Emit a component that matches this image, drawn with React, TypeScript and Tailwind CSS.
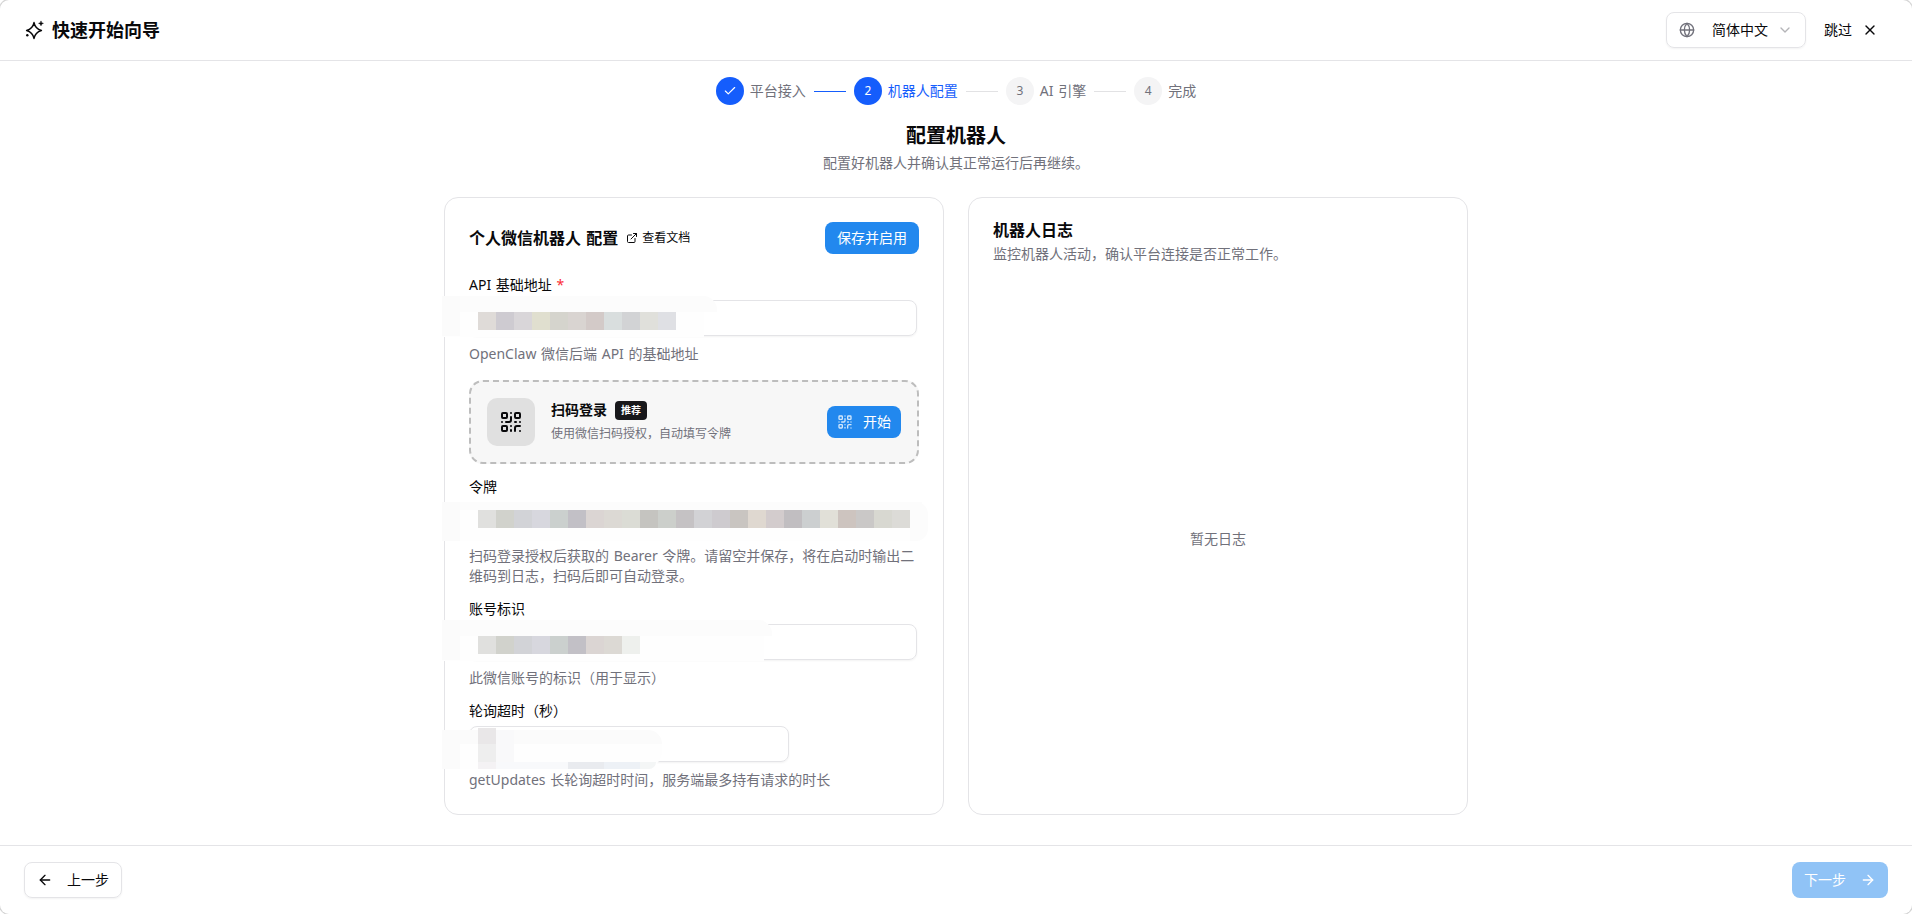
import type { ReactNode } from 'react';
import { ArrowLeft, ArrowRight, Check, ChevronDown, ExternalLink, Globe, QrCode, X } from 'lucide-react';

interface Step {
  label: string;
  state: 'done' | 'active' | 'pending';
}

const steps: Step[] = [
  { label: '平台接入', state: 'done' },
  { label: '机器人配置', state: 'active' },
  { label: 'AI 引擎', state: 'pending' },
  { label: '完成', state: 'pending' },
];

const urlMask = ['#dfdbd8', '#cecbd1', '#d9d6d9', '#e0dfcf', '#d5d4cd', '#d9d4d1', '#d3cac8', '#d9dede', '#d2d3d5', '#e0e0db', '#dfe0e4'];
const tokenMask = [
  '#e0e0de', '#d1d2cc', '#d2d3d7', '#d7d7de', '#cbd0ce', '#c2c0c6', '#dbd5d3', '#dcd9d4',
  '#dbdcd5', '#c5c4c0', '#cccfcb', '#c5c2c4', '#d2d2d5', '#cecbcf', '#c9c5c1', '#dfd8d0',
  '#d3cccd', '#c1bec1', '#cccfd0', '#e1e0d8', '#cdc4bf', '#cac8c7', '#d8d8d1', '#dcdbd7',
];
const accountMask = ['#e0e0de', '#d1d2cc', '#d2d3d7', '#d7d7de', '#cbd0ce', '#c2c0c6', '#dbd5d3', '#dcd9d4', '#eef0ed'];

function SparkleIcon() {
  return (
    <svg viewBox="0 0 20 20" className="h-5 w-5" fill="none">
      <path
        d="M10 2.6c.9 4.6 2.8 6.5 7.4 7.9-4.6 1.4-6.5 3.3-7.4 7.9-.9-4.6-2.8-6.5-7.4-7.9 4.6-1.4 6.5-3.3 7.4-7.9Z"
        stroke="currentColor"
        strokeWidth="1.5"
        strokeLinejoin="round"
      />
      <path d="M17 .9c.4 1.5.9 2 2.4 2.5-1.5.4-2 .9-2.4 2.4-.4-1.5-.9-2-2.4-2.4 1.5-.5 2-1 2.4-2.5Z" fill="currentColor" stroke="currentColor" strokeWidth=".5" />
      <circle cx="3.3" cy="15.3" r="1.2" fill="currentColor" />
    </svg>
  );
}

function MaskBlocks({ colors }: { colors: string[] }) {
  return (
    <div className="flex">
      {colors.map((color, i) => (
        <div key={i} className="h-[18px] w-[18px]" style={{ backgroundColor: color }} />
      ))}
    </div>
  );
}

function Stepper() {
  return (
    <div className="flex items-center justify-center gap-2 pt-4">
      {steps.map((step, i) => (
        <div key={step.label} className="flex items-center gap-2">
          {i > 0 && <div className={`h-px w-8 ${step.state === 'active' ? 'bg-[#155dfc]' : 'bg-[#e2e2e4]'}`} />}
          <div className="flex items-center gap-1.5">
            <div
              className={`flex h-7 w-7 items-center justify-center rounded-full text-xs ${
                step.state === 'pending' ? 'bg-[#f4f4f5] text-[#71717b]' : 'bg-[#155dfc] text-white'
              }`}
            >
              {step.state === 'done' ? <Check className="h-3.5 w-3.5" /> : i + 1}
            </div>
            <span className={`text-sm whitespace-nowrap ${step.state === 'active' ? 'text-[#155dfc]' : 'text-[#71717b]'}`}>
              {step.label}
            </span>
          </div>
        </div>
      ))}
    </div>
  );
}

interface FieldProps {
  label: string;
  description: string;
  required?: boolean;
  width?: string;
  children?: ReactNode;
}

function Field({ label, description, required, width = 'w-[448px]', children }: FieldProps) {
  return (
    <div className="flex flex-col gap-2">
      <label className="text-sm leading-none">
        {label}
        {required && <span className="text-[#fb2c36]"> *</span>}
      </label>
      <div className={`relative h-9 rounded-lg border border-[#e4e4e7] shadow-xs ${width}`}>{children}</div>
      <p className="text-sm text-[#71717b]">{description}</p>
    </div>
  );
}

function QrLoginCard() {
  return (
    <div className="flex h-[84px] items-center rounded-[14px] border-2 border-dashed border-[#bdbdbd] bg-[#f7f7f7] px-4">
      <div className="flex h-12 w-12 items-center justify-center rounded-[10px] bg-[#e0e0e0]">
        <QrCode className="h-6 w-6" />
      </div>
      <div className="ml-4 flex-1">
        <div className="flex items-center gap-2">
          <span className="text-sm font-semibold">扫码登录</span>
          <span className="flex h-[19px] items-center rounded bg-[#18181b] px-1.5 text-[10px] font-bold text-white">推荐</span>
        </div>
        <p className="mt-1 text-xs leading-5 text-[#71717b]">使用微信扫码授权，自动填写令牌</p>
      </div>
      <button className="flex h-8 w-[74px] items-center gap-2.5 rounded-lg bg-[#2288ee] pl-2.5 text-sm text-white">
        <QrCode className="h-4 w-4 opacity-80" />
        开始
      </button>
    </div>
  );
}

export default function App() {
  return (
    <div className="h-[914px] bg-white font-['Noto_Sans','Noto_Sans_CJK_SC',sans-serif] text-[#09090b] [word-spacing:1px]">
      <div className="flex h-full flex-col overflow-hidden rounded-[9px] bg-white shadow-[0_0_0_1px_#d4d4d4]">
        <header className="flex h-[61px] shrink-0 items-center justify-between border-b border-[#e4e4e7] px-6">
          <div className="flex items-center gap-2">
            <SparkleIcon />
            <h1 className="text-lg font-bold">快速开始向导</h1>
          </div>
          <div className="flex items-center">
            <button className="flex h-9 w-[140px] items-center rounded-lg border border-[#e4e4e7] pl-3 text-sm shadow-xs">
              <Globe className="h-4 w-4 text-[#71717b]" />
              <span className="ml-[17px]">简体中文</span>
              <ChevronDown className="ml-[9px] h-4 w-4 text-[#b4b4b8]" />
            </button>
            <button className="mr-2.5 ml-[18px] flex items-center gap-2.5 text-sm">
              跳过
              <X className="h-4 w-4" />
            </button>
          </div>
        </header>

        <main className="flex-1">
          <Stepper />
          <div className="mt-4 text-center">
            <h2 className="pt-px text-xl leading-[27px] font-bold">配置机器人</h2>
            <p className="mt-1 text-sm text-[#71717b]">配置好机器人并确认其正常运行后再继续。</p>
          </div>

          <div className="mx-auto mt-6 grid h-[618px] w-[1024px] grid-cols-2 gap-6">
            <section className="rounded-[14px] border border-[#e4e4e7] p-6">
              <div className="flex h-8 items-center justify-between">
                <div className="flex items-center gap-2">
                  <h3 className="text-base font-semibold">个人微信机器人 配置</h3>
                  <a className="flex items-center gap-1 text-xs">
                    <ExternalLink className="h-3 w-3" />
                    查看文档
                  </a>
                </div>
                <button className="h-8 w-[94px] rounded-lg bg-[#2288ee] text-sm text-white">保存并启用</button>
              </div>

              <div className="mt-6 flex flex-col gap-4">
                <Field label="API 基础地址" description="OpenClaw 微信后端 API 的基础地址" required>
                  {/* redaction strip laid over the input */}
                  <div className="absolute -top-[5px] -left-[28px] h-10 w-[275px]">
                    <div className="h-[41px] w-[262px] bg-[#fefefe]" />
                    <div className="absolute top-0 left-0 h-full w-[18px] bg-[#fbfbfb]" />
                    <div className="absolute top-0 left-[18px] h-4 w-[257px] rounded-tr-[14px] bg-[#fcfcfc]" />
                    <div className="absolute top-4 left-9">
                      <MaskBlocks colors={urlMask} />
                    </div>
                  </div>
                </Field>

                <QrLoginCard />

                <Field
                  label="令牌"
                  description="扫码登录授权后获取的 Bearer 令牌。请留空并保存，将在启动时输出二维码到日志，扫码后即可自动登录。"
                >
                  <div className="absolute -top-px -left-[28px] h-[39px] w-[486px] rounded-r-xl bg-[#fefefe]">
                    <div className="absolute top-0 left-0 h-full w-[18px] bg-[#fbfbfb]" />
                    <div className="absolute top-0 left-[18px] h-2 w-[462px] bg-[#fcfcfc]" />
                    <div className="absolute top-0 right-0 h-full w-[18px] rounded-r-xl bg-[#fcfcfc]" />
                    <div className="absolute top-2 left-9">
                      <MaskBlocks colors={tokenMask} />
                    </div>
                  </div>
                </Field>

                <Field label="账号标识" description="此微信账号的标识（用于显示）">
                  <div className="absolute -top-[5px] -left-[28px] h-10 w-[330px]">
                    <div className="h-[41px] w-[322px] bg-[#fefefe]" />
                    <div className="absolute top-0 left-0 h-full w-[18px] bg-[#fbfbfb]" />
                    <div className="absolute top-0 left-[18px] h-4 w-[312px] rounded-tr-[14px] bg-[#fcfcfc]" />
                    <div className="absolute top-4 left-9">
                      <MaskBlocks colors={accountMask} />
                    </div>
                  </div>
                </Field>

                <Field label="轮询超时（秒）" description="getUpdates 长轮询超时时间，服务端最多持有请求的时长" width="w-80">
                  <div className="absolute top-[3px] -left-[28px] h-[39px] w-[220px] rounded-r-[18px] bg-[#fefefe]">
                    <div className="absolute top-0 left-0 h-full w-[18px] bg-[#fbfbfb]" />
                    <div className="absolute top-0 left-[18px] h-3.5 w-[202px] rounded-tr-[14px] bg-[#fbfbfb]" />
                    <div className="absolute -top-0.5 left-9 h-4 w-[18px] bg-[#e9e7e8]" />
                    <div className="absolute top-3.5 left-9 h-[18px] w-[18px] bg-[#eeeeee]" />
                    <div className="absolute top-0 left-[54px] h-8 w-[18px] bg-[#f9f9fa]" />
                    <div className="absolute bottom-0 left-9 flex h-[7px]">
                      <div className="w-[18px] bg-[#f4f2f4]" />
                      <div className="w-[72px] bg-[#f8f9fb]" />
                      <div className="w-9 bg-[#e9ebef]" />
                      <div className="w-9 bg-[#edf1f6]" />
                      <div className="w-4 rounded-br-lg bg-[#f4f6f6]" />
                    </div>
                  </div>
                </Field>
              </div>
            </section>

            <section className="flex flex-col rounded-[14px] border border-[#e4e4e7] p-6">
              <h3 className="text-base leading-none font-semibold">机器人日志</h3>
              <p className="mt-1.5 text-sm text-[#71717b]">监控机器人活动，确认平台连接是否正常工作。</p>
              <div className="mt-6 flex flex-1 items-center justify-center text-sm text-[#71717b]">暂无日志</div>
            </section>
          </div>
        </main>

        <footer className="flex h-[69px] shrink-0 items-center justify-between border-t border-[#e4e4e7] px-6">
          <button className="flex h-9 w-[98px] items-center gap-3.5 rounded-lg border border-[#e4e4e7] pl-3 text-sm shadow-xs">
            <ArrowLeft className="h-4 w-4" />
            上一步
          </button>
          <button className="flex h-9 w-24 items-center gap-3.5 rounded-lg bg-[#90c3f6] pl-3 text-sm text-white">
            下一步
            <ArrowRight className="h-4 w-4" />
          </button>
        </footer>
      </div>
    </div>
  );
}
